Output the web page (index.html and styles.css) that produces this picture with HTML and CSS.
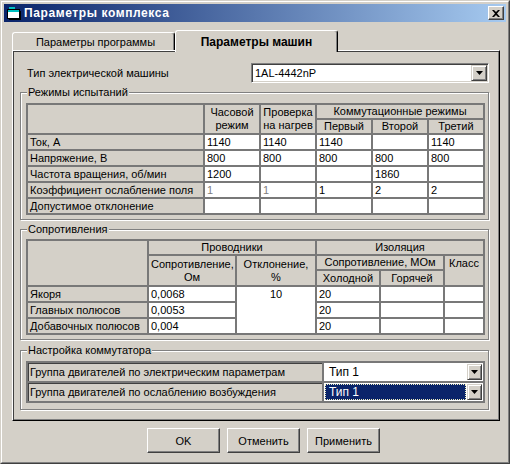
FILE: index.html
```html
<!doctype html>
<html lang="ru">
<head>
    <meta charset="UTF-8">
    <title>Параметры комплекса</title>
    <link rel="stylesheet" href="styles.css">
</head>
<body>
<div class="window">
    <div class="window-in">
        <div class="caption">
            <svg class="caption-icon" width="16" height="16" viewBox="0 0 16 16">
                <rect x="1.5" y="4.5" width="12" height="9" fill="#fff" stroke="#000"/>
                <rect x="2" y="5" width="11" height="2" fill="#00c0c0"/>
                <rect x="3" y="2" width="6" height="2" fill="#00c0c0"/>
                <rect x="14" y="6" width="1" height="8" fill="#000"/>
                <rect x="3" y="14" width="12" height="1" fill="#000"/>
            </svg>
            <span class="caption-text">Параметры комплекса</span>
            <div class="caption-close">
                <svg width="8" height="7" viewBox="0 0 8 7"><path d="M0 0h2l2 2 2-2h2L5 3.5 8 7H6L4 5 2 7H0l3-3.5z" fill="#000"/></svg>
            </div>
        </div>

        <div class="tabs">
            <div class="tab">Параметры программы</div>
            <div class="tab tab-active">Параметры машин</div>
        </div>

        <div class="page">
            <div class="machine">
                <span class="machine-label">Тип электрической машины</span>
                <div class="combo combo-machine">
                    <span class="combo-text">1AL-4442nP</span>
                    <span class="combo-btn"><svg width="7" height="4" viewBox="0 0 7 4"><path d="M0 0h7L3.5 4z" fill="#000"/></svg></span>
                </div>
            </div>

            <div class="group">
                <div class="group-title">Режимы испытаний</div>
                <table class="grid">
                    <colgroup>
                        <col class="c177"><col class="c56"><col class="c56"><col class="c56"><col class="c56"><col class="c56">
                    </colgroup>
                    <tr class="r15">
                        <th rowspan="2"></th>
                        <th rowspan="2">Часовой<br>режим</th>
                        <th rowspan="2">Проверка<br>на нагрев</th>
                        <th colspan="3">Коммутационные режимы</th>
                    </tr>
                    <tr class="r15">
                        <th>Первый</th><th>Второй</th><th>Третий</th>
                    </tr>
                    <tr class="r16">
                        <td class="lbl">Ток, А</td><td>1140</td><td>1140</td><td>1140</td><td></td><td>1140</td>
                    </tr>
                    <tr class="r16">
                        <td class="lbl">Напряжение, В</td><td>800</td><td>800</td><td>800</td><td>800</td><td>800</td>
                    </tr>
                    <tr class="r16">
                        <td class="lbl">Частота вращения, об/мин</td><td>1200</td><td></td><td></td><td>1860</td><td></td>
                    </tr>
                    <tr class="r16">
                        <td class="lbl">Коэффициент ослабление поля</td><td class="off">1</td><td class="off">1</td><td>1</td><td>2</td><td>2</td>
                    </tr>
                    <tr class="r16">
                        <td class="lbl">Допустимое отклонение</td><td></td><td></td><td></td><td></td><td></td>
                    </tr>
                </table>
            </div>

            <div class="group">
                <div class="group-title">Сопротивления</div>
                <table class="grid">
                    <colgroup>
                        <col class="c121"><col class="c88"><col class="c80"><col class="c64"><col class="c64"><col class="c40">
                    </colgroup>
                    <tr class="r15">
                        <th rowspan="3"></th>
                        <th colspan="2">Проводники</th>
                        <th colspan="3">Изоляция</th>
                    </tr>
                    <tr class="r15">
                        <th rowspan="2">Сопротивление,<br>Ом</th>
                        <th rowspan="2">Отклонение,<br>%</th>
                        <th colspan="2">Сопротивление, МОм</th>
                        <th rowspan="2" class="top">Класс</th>
                    </tr>
                    <tr class="r16">
                        <th>Холодной</th><th>Горячей</th>
                    </tr>
                    <tr class="r16">
                        <td class="lbl">Якоря</td><td>0,0068</td><td rowspan="3" class="mid-top">10</td><td>20</td><td></td><td></td>
                    </tr>
                    <tr class="r16">
                        <td class="lbl">Главных полюсов</td><td>0,0053</td><td>20</td><td></td><td></td>
                    </tr>
                    <tr class="r16">
                        <td class="lbl">Добавочных полюсов</td><td>0,004</td><td>20</td><td></td><td></td>
                    </tr>
                </table>
            </div>

            <div class="group group-last">
                <div class="group-title">Настройка коммутатора</div>
                <table class="grid">
                    <colgroup>
                        <col class="c296"><col class="c161">
                    </colgroup>
                    <tr class="r20">
                        <td class="lbl sunk">Группа двигателей по электрическим параметрам</td>
                        <td class="cell-combo">
                            <div class="combo-in">
                                <span class="combo-text">Тип 1</span>
                                <span class="combo-btn"><svg width="7" height="4" viewBox="0 0 7 4"><path d="M0 0h7L3.5 4z" fill="#000"/></svg></span>
                            </div>
                        </td>
                    </tr>
                    <tr class="r20">
                        <td class="lbl sunk">Группа двигателей по ослаблению возбуждения</td>
                        <td class="cell-combo">
                            <div class="combo-in">
                                <span class="combo-text combo-sel">Тип 1</span>
                                <span class="combo-btn"><svg width="7" height="4" viewBox="0 0 7 4"><path d="M0 0h7L3.5 4z" fill="#000"/></svg></span>
                            </div>
                        </td>
                    </tr>
                </table>
            </div>
        </div>

        <div class="buttons">
            <div class="btn">OK</div>
            <div class="btn">Отменить</div>
            <div class="btn">Применить</div>
        </div>
    </div>
</div>
</body>
</html>
```

FILE: styles.css
```css
*{
    margin: 0;
    padding: 0;
    box-sizing: border-box;
}
body{
    background: #d4d0c8;
    font-family: "Liberation Sans", Arial, sans-serif;
    font-size: 11px;
    color: #000;
}

/* window frame */
.window{
    width: 510px;
    height: 464px;
    border: 1px solid;
    border-color: #d4d0c8 #404040 #404040 #d4d0c8;
}
.window-in{
    height: 100%;
    border: 1px solid;
    border-color: #fff #808080 #808080 #fff;
    padding: 2px;
}
.caption{
    display: flex;
    align-items: center;
    height: 18px;
    padding: 0 2px;
    background: linear-gradient(to right, #0a246a, #a6caf0);
}
.caption-icon{
    margin-right: 2px;
}
.caption-text{
    flex: 1;
    color: #fff;
    font-weight: bold;
    font-size: 12px;
    letter-spacing: 0.6px;
}
.caption-close{
    width: 16px;
    height: 14px;
    display: flex;
    align-items: center;
    justify-content: center;
    background: #d4d0c8;
    border: 1px solid;
    border-color: #fff #404040 #404040 #fff;
    box-shadow: inset -1px -1px 0 #808080;
}

/* tabs */
.tabs{
    display: flex;
    align-items: flex-end;
    height: 20px;
    margin-top: 8px;
    padding-left: 8px;
}
.tab{
    width: 163px;
    height: 18px;
    display: flex;
    justify-content: center;
    align-items: center;
    padding: 1px 0 0 4px;
    font-size: 11px;
    background: #d4d0c8;
    border: 1px solid;
    border-bottom: none;
    border-color: #fff #000 #000 #fff;
    border-radius: 3px 3px 0 0;
    box-shadow: inset -1px 0 0 #808080;
}
.tab-active{
    height: 22px;
    margin-bottom: -2px;
    position: relative;
    z-index: 1;
    font-size: 12px;
    font-weight: bold;
    padding: 0;
}

/* page */
.page{
    height: 371px;
    margin: 0 6px 0 8px;
    padding: 12px 10px 0 7px;
    border: 1px solid;
    border-color: #fff #000 #000 #fff;
    box-shadow: inset 1px 1px 0 #404040, inset -1px -1px 0 #808080;
}
.machine{
    display: flex;
    align-items: center;
    height: 20px;
}
.machine-label{
    margin-left: 7px;
}
.combo{
    display: flex;
    align-items: center;
    background: #fff;
}
.combo-machine{
    width: 238px;
    height: 20px;
    margin-left: auto;
    padding: 1px;
    border: 1px solid;
    border-color: #808080 #fff #fff #808080;
    box-shadow: inset 1px 1px 0 #404040, inset -1px -1px 0 #d4d0c8;
}
.combo-text{
    flex: 1;
    padding-left: 2px;
}
.combo-btn{
    width: 16px;
    height: 16px;
    display: flex;
    align-items: center;
    justify-content: center;
    background: #d4d0c8;
    border: 1px solid;
    border-color: #d4d0c8 #404040 #404040 #d4d0c8;
    box-shadow: inset 1px 1px 0 #fff, inset -1px -1px 0 #808080;
}

/* group boxes */
.group{
    margin-top: 9px;
    padding: 0 3px 4px 5px;
    border: 1px solid #808080;
    box-shadow: 1px 1px 0 #fff, inset 1px 1px 0 #fff;
}
.group-last{
    margin-top: 10px;
    padding-bottom: 6px;
}
.group-title{
    width: fit-content;
    height: 14px;
    line-height: 14px;
    margin: -8px 0 0 1px;
    padding: 0 1px;
    background: #d4d0c8;
}

/* grids */
.grid{
    width: 459px;
    margin-top: 4px;
    table-layout: fixed;
    border-collapse: separate;
    border-spacing: 0;
    border-top: 2px solid #787878;
    border-left: 2px solid #787878;
}
.group:nth-child(3) .grid{
    margin-top: 3px;
}
.grid th,
.grid td{
    padding: 0 2px;
    border-right: 2px solid #787878;
    border-bottom: 2px solid #787878;
    line-height: 13px;
    white-space: nowrap;
    overflow: hidden;
    font-weight: normal;
}
.grid th{
    text-align: center;
    background: #d4d0c8;
}
.grid td{
    background: #fff;
}
.grid td.lbl{
    background: #d4d0c8;
}
.grid .top{
    vertical-align: top;
    padding-top: 1px;
}
.grid .mid-top{
    text-align: center;
    vertical-align: top;
    padding-top: 1px;
}
.grid td.off{
    color: #808080;
}
.grid td.sunk{
    padding-left: 2px;
    box-shadow: inset 1px 1px 0 #404040;
}
.grid td.cell-combo{
    padding: 0;
}
.combo-in{
    display: flex;
    align-items: center;
    height: 18px;
    padding: 1px;
    font-size: 12px;
    background: #fff;
}
.combo-in .combo-text{
    height: 16px;
    line-height: 14px;
    padding-left: 3px;
    border: 1px solid transparent;
}
.combo-in .combo-sel{
    margin-right: 1px;
    background: #0a246a;
    color: #fff;
    border: 1px dotted #f0f0c0;
}
.combo-in .combo-btn{
    width: 15px;
    height: 16px;
}

.r15{ height: 15px; }
.r16{ height: 16px; }
.r20{ height: 20px; }

.c177{ width: 177px; }
.c56{ width: 56px; }
.c121{ width: 121px; }
.c88{ width: 88px; }
.c80{ width: 80px; }
.c64{ width: 64px; }
.c40{ width: 40px; }
.c296{ width: 296px; }
.c161{ width: 161px; }

/* buttons */
.buttons{
    display: flex;
    gap: 7px;
    margin-top: 7px;
    padding-left: 143px;
}
.btn{
    width: 73px;
    height: 25px;
    display: flex;
    align-items: center;
    justify-content: center;
    border: 1px solid;
    border-color: #fff #404040 #404040 #fff;
    box-shadow: inset -1px -1px 0 #808080;
}
```
